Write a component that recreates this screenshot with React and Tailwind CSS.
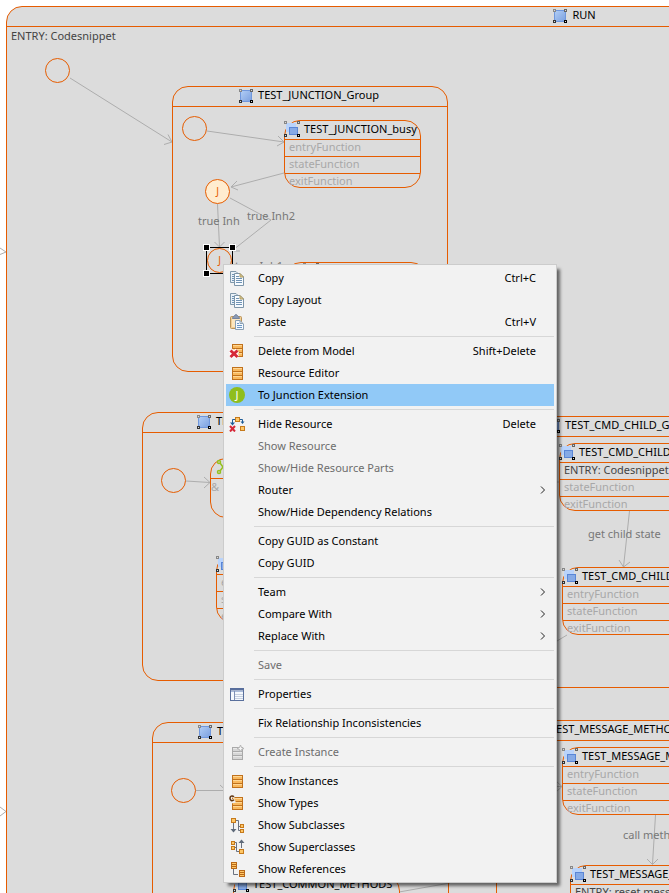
import clsx from "clsx";

/* ---------- diagram icons ---------- */

const Handles = ({ size }) => (
  <g fill="#dcdcdc">
    <rect x="0.5" y="0.5" width="2" height="2" stroke="#888" />
    <rect x={size - 2.5} y="0.5" width="2" height="2" stroke="#666" />
    <rect x="0.5" y={size - 2.5} width="2" height="2" stroke="#333" />
    <rect x={size - 2.5} y={size - 2.5} width="2" height="2" stroke="#000" />
  </g>
);

const GroupIcon = () => (
  <svg width="14" height="14" className="shrink-0">
    <defs>
      <linearGradient id="groupFill" x1="0" y1="0" x2="1" y2="1">
        <stop offset="0" stopColor="#b3cff6" />
        <stop offset="1" stopColor="#7a9fdf" />
      </linearGradient>
    </defs>
    <rect x="1.5" y="1.5" width="11" height="11" fill="url(#groupFill)" stroke="#6f97dc" />
    <Handles size={14} />
  </svg>
);

const StateIcon = () => (
  <svg width="16" height="16" className="shrink-0">
    <rect x="2" y="2" width="10" height="9" fill="#b9d3fb" />
    <rect x="5.5" y="6.5" width="8" height="7" fill="#86aae6" stroke="#5a86d6" />
    <Handles size={16} />
  </svg>
);

const BranchIcon = () => (
  <svg width="16" height="16" className="shrink-0" fill="none" stroke="#95c11f" strokeWidth="1.5">
    <circle cx="4" cy="3" r="1.5" />
    <circle cx="4" cy="13" r="1.5" />
    <circle cx="13" cy="8" r="1.5" />
    <path d="M5 4 L8 8 L5 12 M8 8 H11" />
  </svg>
);

/* ---------- menu icons ---------- */

const Svg = ({ children }) => (
  <svg width="16" height="16" viewBox="0 0 16 16" fill="none">
    {children}
  </svg>
);

const CopyIcon = () => (
  <Svg>
    <path d="M1.5 1.5H7L9.5 4V12.5H1.5Z" fill="#e9f1f8" stroke="#8098ab" />
    <path d="M3 4.5H5M3 6.5H5M3 8.5H5M3 10.5H5" stroke="#6f93b5" />
    <path d="M5.5 3.5H11L14.5 7V15.5H5.5Z" fill="#f7fbff" stroke="#7d95a8" />
    <path d="M11 3.5V7H14.5Z" fill="#e7cf8b" stroke="#a99a69" />
    <path d="M7 6.5H10M7 8.5H13M7 10.5H13M7 12.5H13" stroke="#6f93b5" />
  </Svg>
);

const PasteIcon = () => (
  <Svg>
    <rect x="1.5" y="2.5" width="11" height="12" rx="1" fill="#f3cf94" stroke="#b9935a" />
    <rect x="3" y="5" width="8" height="8" fill="#fbe6c0" />
    <path d="M3.5 4.5C3.5 2.5 5 3 5.5 1.5Q7 -0.5 8.5 1.5C9 3 10.5 2.5 10.5 4.5Z" fill="#8b9ab4" stroke="#74839d" />
    <path d="M6.5 6.5H11L14.5 10V15.5H6.5Z" fill="#f4f9ff" stroke="#8aa0b4" />
    <path d="M11 6.5V9.5H14" stroke="#8aa0b4" />
    <path d="M8 9.5H10M8 11.5H13M8 13.5H13" stroke="#6b97c4" />
  </Svg>
);

const Stack = ({ x = 3, y = 2, gray }) => (
  <g>
    <rect x={x} y={y} width="11" height="13" fill={gray ? "#a9a9a9" : "#c0711c"} />
    <path d={`M${x + 1} ${y + 2.5}h9M${x + 1} ${y + 6.5}h9M${x + 1} ${y + 10.5}h9`} stroke={gray ? "#d6d6d6" : "#f9b85c"} strokeWidth="3" />
    <path d={`M${x + 1} ${y + 1.5}h9M${x + 1} ${y + 5.5}h9M${x + 1} ${y + 9.5}h9`} stroke={gray ? "#e8e8e8" : "#ffd794"} />
  </g>
);

const InstancesIcon = () => (
  <Svg>
    <Stack />
  </Svg>
);

const DeleteIcon = () => (
  <Svg>
    <Stack y={1} />
    <path d="M1.5 7.5L8.5 14M8.5 7.5L1.5 14" stroke="#fff" strokeWidth="5" />
    <path d="M1.5 7.5L8.5 14M8.5 7.5L1.5 14" stroke="#d62839" strokeWidth="3" />
  </Svg>
);

const CreateIcon = () => (
  <Svg>
    <Stack y={3} gray />
    <path d="M11.5 1L12.5 3.5L15 4.5L12.5 5.5L11.5 8L10.5 5.5L8 4.5L10.5 3.5Z" fill="#f4f4f4" stroke="#b5b5b5" />
  </Svg>
);

const TypesIcon = () => (
  <Svg>
    <Stack y={2} />
    <path d="M6 1.5C3 -0.5 0.5 1 0.5 3.5S3 7 6 5.5" stroke="#f0f0f0" strokeWidth="4" />
    <path d="M5 1.8C3 0 1 1.2 1 3.3S3 6.5 5 4.8" stroke="#5d3310" strokeWidth="1.5" />
  </Svg>
);

const JunctionIcon = () => (
  <span className="flex size-4 items-center justify-center rounded-full bg-[#8fbe1d] text-[11px] leading-4 text-white">J</span>
);

const Box = ({ x, y, s = 4 }) => <rect x={x + 0.5} y={y + 0.5} width={s - 1} height={s - 1} fill="#ffc766" stroke="#c67a1c" />;

const HideIcon = () => (
  <Svg>
    <path d="M6 3.5H3.5V8M10 3.5H13.5V7" stroke="#1e5c97" />
    <path d="M1 6.5H6L3.5 9.5ZM11.5 5.5H15.5L13.5 8Z" fill="#1e5c97" />
    <Box x={6} y={1} s={5} />
    <Box x={11} y={10} s={5} />
    <path d="M1 10L6 15.5M6 10L1 15.5" stroke="#d62839" strokeWidth="2" />
  </Svg>
);

const PropertiesIcon = () => (
  <Svg>
    <rect x="1.5" y="2.5" width="13" height="12" fill="#f4f8fd" stroke="#596f9c" />
    <path d="M1 3.5H15" stroke="#596f9c" strokeWidth="2" />
    <path d="M2 5.5H14" stroke="#a9bbda" />
    <path d="M5.5 5V14" stroke="#7e90b5" />
    <path d="M6 8.5H14M6 10.5H14M6 12.5H14" stroke="#c5cfdf" />
  </Svg>
);

const SubclassesIcon = () => (
  <Svg>
    <path d="M4.5 6V13M7 3.5H9.5V13.5H12M9.5 9.5H12" stroke="#6b7280" />
    <path d="M1.5 12H7.5L4.5 15.5Z" fill="#5f6b7a" />
    <Box x={2} y={1} s={5} />
    <Box x={11} y={7} />
    <Box x={11} y={12} />
  </Svg>
);

const SuperclassesIcon = () => (
  <Svg>
    <path d="M12.5 9V3M5 3.5H7.5V12.5H10M5 8.5H7.5" stroke="#6b7280" />
    <path d="M9.5 4H15.5L12.5 0.5Z" fill="#5f6b7a" />
    <Box x={2} y={2} />
    <Box x={2} y={7} />
    <Box x={10} y={10} s={5} />
  </Svg>
);

const ReferencesIcon = () => (
  <Svg>
    <path d="M4.5 8V13.5H9" stroke="#6b7280" />
    <rect x="2" y="1" width="6" height="7" fill="#b9691a" />
    <path d="M3 2.5h4M3 4.5h4M3 6.5h4" stroke="#ffc766" />
    <rect x="10" y="9" width="6" height="7" fill="#b9691a" />
    <path d="M11 10.5h4M11 12.5h4M11 14.5h4" stroke="#ffc766" />
  </Svg>
);

const Chevron = () => (
  <svg width="6" height="8" viewBox="0 0 6 8" fill="none" stroke="#222" className="ml-1">
    <path d="M1 0.5L4.5 4L1 7.5" />
  </svg>
);

/* ---------- menu ---------- */

const menuSections = [
  [
    { label: "Copy", icon: CopyIcon, keys: "Ctrl+C" },
    { label: "Copy Layout", icon: CopyIcon },
    { label: "Paste", icon: PasteIcon, keys: "Ctrl+V" },
  ],
  [
    { label: "Delete from Model", icon: DeleteIcon, keys: "Shift+Delete" },
    { label: "Resource Editor", icon: InstancesIcon },
    { label: "To Junction Extension", icon: JunctionIcon, active: true },
  ],
  [
    { label: "Hide Resource", icon: HideIcon, keys: "Delete" },
    { label: "Show Resource", disabled: true },
    { label: "Show/Hide Resource Parts", disabled: true },
    { label: "Router", submenu: true },
    { label: "Show/Hide Dependency Relations" },
  ],
  [{ label: "Copy GUID as Constant" }, { label: "Copy GUID" }],
  [
    { label: "Team", submenu: true },
    { label: "Compare With", submenu: true },
    { label: "Replace With", submenu: true },
  ],
  [{ label: "Save", disabled: true }],
  [{ label: "Properties", icon: PropertiesIcon }],
  [{ label: "Fix Relationship Inconsistencies" }],
  [{ label: "Create Instance", icon: CreateIcon, disabled: true }],
  [
    { label: "Show Instances", icon: InstancesIcon },
    { label: "Show Types", icon: TypesIcon },
    { label: "Show Subclasses", icon: SubclassesIcon },
    { label: "Show Superclasses", icon: SuperclassesIcon },
    { label: "Show References", icon: ReferencesIcon },
  ],
];

const MenuItem = ({ label, icon: Icon, keys, submenu, disabled, active }) => (
  <button
    type="button"
    role="menuitem"
    disabled={disabled}
    className={clsx(
      "flex h-[22px] w-full items-center pr-2 text-left",
      active ? "bg-[#91c9f7]" : "enabled:hover:bg-[#91c9f7]",
      disabled ? "text-[#6d6d6d]" : "text-black"
    )}
  >
    <span className="w-8 shrink-0 pl-[3px]">{Icon && <Icon />}</span>
    <span className="grow">{label}</span>
    {keys && <span className="pr-[10px]">{keys}</span>}
    {submenu && <Chevron />}
  </button>
);

const ContextMenu = () => (
  <div
    role="menu"
    className="absolute top-[264px] left-[223px] w-[334px] border border-[#cccccc] bg-[#f2f2f2] p-[2px] shadow-[4px_4px_3px_-1px_rgba(0,0,0,0.55)]"
  >
    {menuSections.map((items, i) => (
      <div key={i}>
        {i > 0 && (
          <div className="flex h-[7px] items-center pl-7">
            <hr className="w-full border-[#d7d7d7]" />
          </div>
        )}
        {items.map((item) => (
          <MenuItem key={item.label} {...item} />
        ))}
      </div>
    ))}
  </div>
);

/* ---------- diagram nodes ---------- */

const Group = ({ title, className, titleClass = "justify-center", children }) => (
  <div className={clsx("absolute rounded-2xl border border-[#e65c00]", className)}>
    <div className={clsx("flex h-5 items-center gap-[5px] border-b border-[#e65c00] pb-[2px]", titleClass)}>
      <GroupIcon />
      <span>{title}</span>
    </div>
    {children}
  </div>
);

const StateBox = ({ title, rows = ["entryFunction", "stateFunction", "exitFunction"], className }) => (
  <div className={clsx("absolute h-[68px] rounded-2xl border border-[#e65c00]", className)}>
    <div className="-ml-px flex h-[19px] items-center gap-1 border-b border-[#e65c00] pb-[2px]">
      <StateIcon />
      <span>{title}</span>
    </div>
    {rows.map((row) => (
      <div
        key={row}
        className={clsx(
          "h-[17px] border-b border-[#e65c00] pl-1 leading-[14px] last:border-b-0",
          row.startsWith("ENTRY") ? "text-[#444444]" : "text-[#a8a8a8]"
        )}
      >
        {row}
      </div>
    ))}
  </div>
);

const Circle = ({ className, children }) => (
  <div className={clsx("absolute flex size-[25px] items-center justify-center rounded-full border border-[#e65c00] text-[10px] text-[#e65c00]", className)}>
    {children}
  </div>
);

const Label = ({ className, children }) => (
  <span className={clsx("absolute leading-4 text-[#777777]", className)}>{children}</span>
);

const Edges = () => (
  <svg className="absolute inset-0 h-full w-full" fill="none" stroke="#adadad">
    <path d="M70 78L172 142M168 134.5L172 142L164 144.5" />
    <path d="M207 131L284 142M278 136L284 142L277 146" />
    <path d="M284 173L231 187M237 181L231 187L238 190" />
    <path d="M217.5 204L219.5 247M214.5 242L219.5 247L224.5 242" />
    <path d="M230 198L271 220L233 250M234 243V251H240" />
    <path d="M186 481L210 482.5M204 477L210 482.5L204 488" />
    <path d="M196 790.5H224M220 785L226 790.5" />
    <path d="M629.5 511L623.5 567M619 560L623.5 567L630 562" />
    <path d="M655.5 815L652.5 864M647 859L652.5 864.5L658 859" />
    <path d="M557 641L567 635M557 482H559" />
    <path d="M556 786.5H562M556 781L562 786.5L556 792" />
    <path d="M399 892L450 883" />
    <path d="M0 248L6 252L0 254.5M0 807L6 811.5L0 816" />
  </svg>
);

const Selection = () => (
  <div className="absolute top-[247px] left-[206px] size-[27px] border border-black">
    <i className="absolute -top-[3px] -left-[3px] size-[5px] bg-black outline outline-white" />
    <i className="absolute -top-[3px] -right-[3px] size-[5px] bg-black outline outline-white" />
    <i className="absolute -bottom-[3px] -left-[3px] size-[5px] bg-black outline outline-white" />
  </div>
);

const Diagram = () => (
  <>
    <Group title="RUN" className="top-[6px] left-[6px] h-[1200px] w-[1137px] bg-[#dcdcdc]">
      <p className="pl-1 leading-[18px] text-[#444444]">ENTRY: Codesnippet</p>
    </Group>
    <Edges />

    <Circle className="top-[58px] left-[45px]" />
    <Group title="TEST_JUNCTION_Group" className="top-[86px] left-[172px] h-[286px] w-[276px]" titleClass="justify-center pr-[2px]" />
    <Circle className="top-[116px] left-[182px]" />
    <StateBox title="TEST_JUNCTION_busy" className="top-[120px] left-[284px] w-[137px]" />
    <Circle className="top-[179px] left-[205px] bg-[#ffeccf]">J</Circle>
    <Circle className="top-[248px] left-[207px]">J</Circle>
    <Selection />
    <Label className="top-[213px] left-[198px]">true Inh</Label>
    <Label className="top-[208px] left-[247px]">true Inh2</Label>
    <Label className="top-[258px] left-[235px]">true Inh1</Label>
    <div className="absolute top-[262px] left-[285px] h-[68px] w-[142px] rounded-2xl border border-[#e65c00] pl-[17px]">
      <StateIcon />
    </div>

    <Group title="TEST" className="top-[412px] left-[142px] h-[269px] w-[306px]" titleClass="pl-[54px]" />
    <Circle className="top-[468px] left-[161px]" />
    <div className="absolute top-[458px] left-[210px] h-[60px] w-[150px] rounded-2xl border border-[#e65c00]">
      <div className="h-5 border-b border-[#e65c00] pl-1">
        <BranchIcon />
      </div>
      <p className="text-[#a8a8a8]">&amp;</p>
    </div>
    <StateBox className="top-[555px] left-[216px] w-[150px]" />

    <Group title="TEST_CMD_CHILD_GROUP" className="top-[416px] left-[497px] h-[272px] w-[300px]" titleClass="pl-12" />
    <StateBox
      title="TEST_CMD_CHILD_init"
      rows={["ENTRY: Codesnippet", "stateFunction", "exitFunction"]}
      className="top-[443px] left-[559px] w-[150px]"
    />
    <Label className="top-[526px] left-[588px]">get child state</Label>
    <StateBox title="TEST_CMD_CHILD_busy" className="top-[567px] left-[562px] w-[150px]" />

    <Group title="TEST" className="top-[722px] left-[152px] h-[300px] w-[297px]" titleClass="pl-[45px]" />
    <Circle className="top-[778px] left-[171px]" />
    <StateBox title="TEST_COMMON_METHODS" className="top-[875px] left-[233px] w-[167px]" />

    <Group title="TEST_MESSAGE_METHODS" className="top-[720px] left-[496px] h-[300px] w-[300px]" titleClass="pl-[34px]" />
    <StateBox title="TEST_MESSAGE_METHODS_init" className="top-[747px] left-[562px] w-[200px]" />
    <Label className="top-[827px] left-[623px]">call method</Label>
    <StateBox
      title="TEST_MESSAGE_busy"
      rows={["ENTRY: reset message", "stateFunction", "exitFunction"]}
      className="top-[865px] left-[570px] w-[200px]"
    />
  </>
);

const App = () => (
  <main className="relative h-screen overflow-hidden bg-white font-['Noto_Sans','Open_Sans',sans-serif] text-[11px] whitespace-nowrap text-black">
    <Diagram />
    <ContextMenu />
  </main>
);

export default App;
